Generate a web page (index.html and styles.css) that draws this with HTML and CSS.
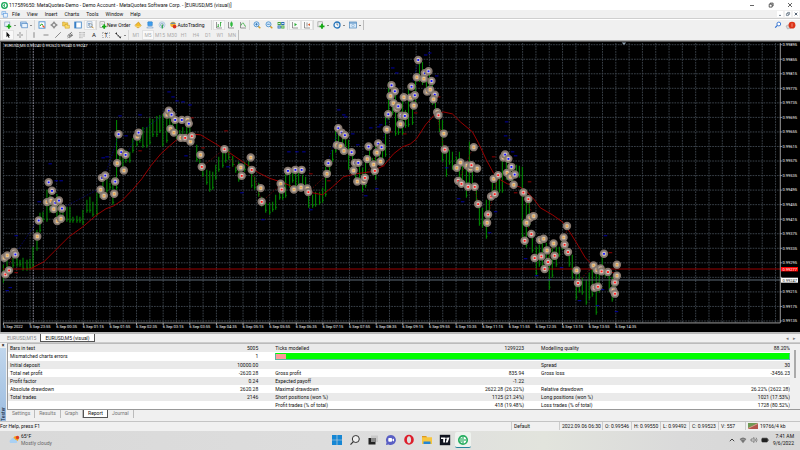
FILE: index.html
```html
<!DOCTYPE html>
<html lang="en">
<head>
<meta charset="utf-8">
<title>MetaQuotes-Demo - [EURUSD,M5 (visual)]</title>
<link rel="stylesheet" href="styles.css">
</head>
<body>
<div class="app">
  <header class="titlebar">
    <svg class="app-icon" viewBox="0 0 8 8"><circle cx="4" cy="4" r="3.2" fill="#fff" stroke="#17a657" stroke-width="1.5"/><path d="M4 2v4M2.8 3.2v1.6" stroke="#17a657" stroke-width=".9"/></svg>
    <span class="grow">117589650: MetaQuotes-Demo - Demo Account - MetaQuotes Software Corp. - [EURUSD,M5 (visual)]</span>
    <button class="win" aria-label="Minimize"><svg viewBox="0 0 6 6"><path d="M1 3.5h4" stroke="#222" stroke-width=".7"/></svg></button>
    <button class="win" aria-label="Restore"><svg viewBox="0 0 6 6"><path d="M1.2 2.2h2.9v2.9H1.2zM2.2 2V1.1h2.9V4h-.8" fill="none" stroke="#222" stroke-width=".7"/></svg></button>
    <button class="win" aria-label="Close"><svg viewBox="0 0 6 6"><path d="M1 1l4 4M5 1L1 5" stroke="#222" stroke-width=".7"/></svg></button>
  </header>

  <nav class="menubar">
    <svg class="doc-icon" viewBox="0 0 8 8"><rect x="1" y=".8" width="4.5" height="3.5" fill="#cfe4fa" stroke="#6fa5df" stroke-width=".7"/><rect x="2.6" y="3" width="4.6" height="4" fill="#e9f3fd" stroke="#5c98dc" stroke-width=".7"/></svg>
    <button>File</button><button>View</button><button>Insert</button><button>Charts</button><button>Tools</button><button>Window</button><button>Help</button>
    <span class="grow"></span>
    <button class="mdi" aria-label="Minimize chart"><svg viewBox="0 0 6 6"><path d="M2 4.4h2" stroke="#567" stroke-width=".8"/></svg></button>
    <button class="mdi" aria-label="Restore chart"><svg viewBox="0 0 6 6"><path d="M1.4 2.6h2v2h-2zM2.6 2.4v-1h2v2h-1" fill="none" stroke="#567" stroke-width=".7"/></svg></button>
    <button class="mdi" aria-label="Close chart"><svg viewBox="0 0 6 6"><path d="M1.7 1.7l2.6 2.6M4.3 1.7L1.7 4.3" stroke="#456" stroke-width=".9"/></svg></button>
  </nav>

  <div class="toolbar">
    <div class="group">
      <button class="drop" aria-label="New chart"><svg viewBox="0 0 8 8"><rect x=".8" y="1" width="5" height="4.6" fill="#e8f1fb" stroke="#7793b3" stroke-width=".6"/><path d="M4.9 3.2v4.6M2.6 5.5h4.6" stroke="#12a812" stroke-width="1.7"/></svg></button>
      <button class="drop" aria-label="Profiles"><svg viewBox="0 0 8 8"><rect x=".7" y="1" width="5.5" height="4" fill="#d8e9fb" stroke="#4d86c4" stroke-width=".7"/><rect x="1.8" y="2.6" width="5.5" height="4.2" fill="#e9f3fd" stroke="#4d86c4" stroke-width=".7"/></svg></button>
    </div>
    <div class="group">
      <button aria-label="Market Watch"><svg viewBox="0 0 8 8"><rect x="1" y=".8" width="6" height="6.4" fill="#fff" stroke="#4a8fd0" stroke-width=".9"/><path d="M2 5l1.5-2L5 4" stroke="#1ea51e" fill="none"/><path d="M4.5 4.5l2 2" stroke="#e55a28" stroke-width="1.2"/></svg></button>
      <button aria-label="Data Window"><svg viewBox="0 0 8 8"><circle cx="4" cy="4" r="2.2" fill="none" stroke="#666" stroke-width=".7"/><path d="M4 .5v2.6M4 4.900v2.600M.5 4h2.600M4.900 4h2.600" stroke="#555" stroke-width=".8"/></svg></button>
      <button aria-label="Navigator"><svg viewBox="0 0 8 8"><path d="M.6 1h2l.6.8h2.600V5H.6z" fill="#f5cf55" stroke="#c59423" stroke-width=".5"/><path d="M3 3.500h1.600l.6.7h2.200v3H3z" fill="#fbdc6c" stroke="#c59423" stroke-width=".5"/></svg></button>
      <button aria-label="Terminal"><svg viewBox="0 0 8 8"><rect x=".7" y="1" width="6.600" height="6" fill="#fff" stroke="#377fc6" stroke-width=".8"/><path d="M1.600 1v6" stroke="#377fc6" stroke-width="1.400"/></svg></button>
      <button class="pressed" aria-label="Strategy Tester"><svg viewBox="0 0 8 8"><rect x="1" y=".8" width="5" height="5.500" fill="#f4f8fc" stroke="#8aa6c3" stroke-width=".6"/><path d="M2 2.500h2M2 4h1" stroke="#3b78bd" stroke-width=".6"/><circle cx="4.600" cy="4.200" r="1.600" fill="#d8ebfc" stroke="#777" stroke-width=".6"/><path d="M5.800 5.400l1.600 1.800" stroke="#c58a21" stroke-width="1"/></svg></button>
    </div>
    <div class="group">
      <button class="wide"><svg viewBox="0 0 8 8"><rect x="1" y=".8" width="4.500" height="5.500" fill="#fff" stroke="#888" stroke-width=".6"/><path d="M2 2.300h2.500M2 3.500h2" stroke="#999" stroke-width=".4"/><path d="M5.200 3.200v4.600M2.900 5.500h4.600" stroke="#12a812" stroke-width="1.700"/></svg>New Order</button>
      <button aria-label="MetaEditor"><svg viewBox="0 0 8 8"><path d="M.8 4.500L4.500 1l2.700 3.700L4 7z" fill="#f4bd2c" stroke="#bd8513" stroke-width=".6"/><path d="M.8 4.500L4 6l3.200-1.300" fill="none" stroke="#fff0a8" stroke-width=".6"/></svg></button>
      <button aria-label="Virtual hosting"><svg viewBox="0 0 8 8"><rect x="1.800" y=".8" width="4.500" height="4" rx=".5" fill="#3d9df0" stroke="#2377bd" stroke-width=".5"/><path d="M.7 7c.4-2 6.200-2 6.600 0z" fill="#dceafa" stroke="#6c93bd" stroke-width=".5"/></svg></button>
      <button aria-label="Signals"><svg viewBox="0 0 8 8"><circle cx="4" cy="3.800" r="3" fill="none" stroke="#9bbcd8" stroke-width=".7"/><circle cx="4" cy="3.800" r="1.600" fill="none" stroke="#5f91c2" stroke-width=".6"/><path d="M4.300 3.500v4" stroke="#27a343" stroke-width="1.200"/></svg></button>
      <button class="wide"><svg viewBox="0 0 8 8"><circle cx="4" cy="3.500" r="2.700" fill="#f2b431"/><path d="M1 2.800Q4 0 7 2.800z" fill="#3a83c8"/><circle cx="5.600" cy="5.600" r="1.900" fill="#d92f1d"/></svg>AutoTrading</button>
    </div>
    <div class="group spaced">
      <button class="pressed" aria-label="Bar chart"><svg viewBox="0 0 8 8"><path d="M1.500 1v6H7" fill="none" stroke="#555" stroke-width=".6"/><path d="M3.300 3v3M5.500 1v4.500M5.500 1.500h1M2.400 5.500h1" stroke="#22a32b" stroke-width=".8"/></svg></button>
      <button aria-label="Candlesticks"><svg viewBox="0 0 8 8"><path d="M1.500 1v6H7" fill="none" stroke="#555" stroke-width=".6"/><path d="M4.500.5v5.500" stroke="#16912a" stroke-width=".7"/><rect x="3.300" y="1.500" width="2.400" height="3.300" fill="#2bbb3a"/></svg></button>
      <button aria-label="Line chart"><svg viewBox="0 0 8 8"><path d="M1.500 1v6H7" fill="none" stroke="#555" stroke-width=".6"/><path d="M2 4.500Q3.800 0 5 3.200T7 5" fill="none" stroke="#22a32b" stroke-width=".7"/></svg></button>
    </div>
    <div class="group">
      <button aria-label="Zoom in"><svg viewBox="0 0 8 8"><path d="M5 5l2.300 2.300" stroke="#d69e25" stroke-width="1.400"/><circle cx="3.500" cy="3.300" r="2.500" fill="#d6ebfd" stroke="#3c86c9" stroke-width=".8"/><path d="M2.200 3.300h2.600M3.500 2v2.600" stroke="#2168ae" stroke-width=".7"/></svg></button>
      <button aria-label="Zoom out"><svg viewBox="0 0 8 8"><path d="M5 5l2.300 2.300" stroke="#d69e25" stroke-width="1.400"/><circle cx="3.500" cy="3.300" r="2.500" fill="#d6ebfd" stroke="#3c86c9" stroke-width=".8"/><path d="M2.200 3.300h2.600" stroke="#2168ae" stroke-width=".7"/></svg></button>
      <button aria-label="Tile windows"><svg viewBox="0 0 8 8"><path d="M.6 1h3.200v3H.6zM4.200 4.400h3.200v3H4.200z" fill="#3fa332"/><path d="M4.200 1h3.200v3H4.200zM.6 4.400h3.200v3H.6z" fill="#2468b4"/><path d="M1.200 2.500h2M4.800 2.500h2M1.200 6h2M4.800 6h2" stroke="#e9f5ff" stroke-width=".9"/></svg></button>
    </div>
    <div class="group">
      <button class="pressed" aria-label="Auto scroll"><svg viewBox="0 0 8 8"><path d="M1.500 1v6H7" fill="none" stroke="#555" stroke-width=".6"/><path d="M3.500 2l2.500 1.600L3.500 5.300z" fill="#2aae37"/></svg></button>
      <button class="pressed" aria-label="Chart shift"><svg viewBox="0 0 8 8"><path d="M1.500 1v6H7M4 1.500v4" fill="none" stroke="#555" stroke-width=".6"/><path d="M7 2.300L4.800 3.700 7 5z" fill="#d85d31"/></svg></button>
    </div>
    <div class="group end">
      <button class="drop" aria-label="Indicators"><svg viewBox="0 0 8 8"><rect x=".9" y=".8" width="4.500" height="5" fill="#eee" stroke="#888" stroke-width=".6"/><path d="M5 2.800v5M2.500 5.300h5" stroke="#12a812" stroke-width="1.800"/></svg></button>
      <button class="drop" aria-label="Periods"><svg viewBox="0 0 8 8"><circle cx="4" cy="4" r="3" fill="#f4faff" stroke="#2674ba" stroke-width="1.300"/><path d="M4 2.200V4h1.300" fill="none" stroke="#345" stroke-width=".6"/></svg></button>
      <button class="drop" aria-label="Templates"><svg viewBox="0 0 8 8"><rect x=".6" y="1" width="6.800" height="6" fill="#d9ebfb" stroke="#4a86bd" stroke-width=".7"/><path d="M.6 2h6.800" stroke="#4a86bd"/><circle cx="4" cy="4.500" r="1.300" fill="none" stroke="#6a9bc6" stroke-width=".5"/></svg></button>
    </div>
    <span class="grow"></span>
    <button aria-label="Search"><svg viewBox="0 0 8 8"><circle cx="4.800" cy="3" r="1.900" fill="#fff" stroke="#2f6fd0" stroke-width=".9"/><path d="M3.400 4.400L1.200 6.700" stroke="#2f6fd0" stroke-width="1.200"/></svg></button>
    <button class="alerts" aria-label="Notifications"><svg viewBox="0 0 12 9"><path d="M1 5l3-1.500L6 7 2.500 8z" fill="#d6d6d6" stroke="#999" stroke-width=".5"/><circle cx="7" cy="4.200" r="3.400" fill="#dc3318"/><path d="M7 2.400v3.400" stroke="#f6b9aa" stroke-width=".7"/></svg></button>
  </div>

  <div class="toolbar second">
    <div class="group">
      <button class="pressed" aria-label="Cursor"><svg viewBox="0 0 8 8"><path d="M2.500.8v5.400l1.300-1.100L4.700 7l.9-.5-.9-1.700h1.500z" fill="#111"/></svg></button>
      <button aria-label="Crosshair"><svg viewBox="0 0 8 8"><path d="M4 1v2.400M4 4.600V7M1 4h2.400M4.600 4H7" stroke="#555" stroke-width=".6"/></svg></button>
    </div>
    <div class="group">
      <button aria-label="Vertical line"><svg viewBox="0 0 8 8"><path d="M4 1.200v5.600" stroke="#444" stroke-width=".6"/></svg></button>
      <button aria-label="Horizontal line"><svg viewBox="0 0 8 8"><path d="M1.500 4h5" stroke="#444" stroke-width=".6"/></svg></button>
      <button aria-label="Trendline"><svg viewBox="0 0 8 8"><path d="M1.200 6.800l5.600-5.600" stroke="#444" stroke-width=".6"/></svg></button>
      <button aria-label="Channel"><svg viewBox="0 0 8 8"><path d="M1 5.500L6 1M1.500 7l5-4M3 7l4-3M2.500 3.500l2 2M4 2l2 3" stroke="#444" stroke-width=".6"/></svg></button>
      <button aria-label="Fibonacci"><svg viewBox="0 0 8 8"><path d="M1 1.500h6M1 3.200h6M1 5h6M1 6.700h4" stroke="#666" stroke-width=".5" stroke-dasharray=".8 .5"/></svg></button>
      <button class="glyph">A</button>
      <button class="glyph boxed">T</button>
      <button class="drop" aria-label="Arrows"><svg viewBox="0 0 8 8"><path d="M1 2.500l2-1.300v2.400zM3.500 4l1.500.8L4 6z M5 6.500l2.300-1.300L6.500 7.500z" fill="#222"/><path d="M2 2.500l4 3.500" stroke="#333" stroke-width=".7"/></svg></button>
    </div>
    <div class="group end frames">
      <button>M1</button><button class="pressed">M5</button><button>M15</button><button>M30</button><button>H1</button><button>H4</button><button>D1</button><button>W1</button><button>MN</button>
    </div>
  </div>

  <main class="chart">
    <svg id="chart" viewBox="0 42 800 290" role="img" aria-label="EURUSD M5 chart"></svg>
  </main>

  <div class="chart-tabs">
    <button>EURUSD,M15</button><button class="active">EURUSD,M5 (visual)</button>
    <span class="grow"></span>
    <button class="arrow" aria-label="Previous">◂</button><button class="arrow" aria-label="Next">▸</button>
  </div>

  <section class="tester">
    <div class="side"><button class="close" aria-label="Close tester">×</button><span class="side-label">Tester</span></div>
    <div class="panel">
      <div class="report">
        <table>
          <colgroup><col class="c-label first"><col class="c-value"><col class="c-label"><col class="c-value"><col class="c-label"><col class="c-value"></colgroup>
          <tr><td>Bars in test</td><td>5005</td><td>Ticks modelled</td><td>1299223</td><td>Modelling quality</td><td>88.20%</td></tr>
          <tr><td>Mismatched charts errors</td><td>1</td><td colspan="4" class="quality"><div class="bar"><i></i></div></td></tr>
          <tr><td>Initial deposit</td><td>10000.00</td><td></td><td></td><td>Spread</td><td>30</td></tr>
          <tr><td>Total net profit</td><td>-2620.28</td><td>Gross profit</td><td>835.94</td><td>Gross loss</td><td>-3456.23</td></tr>
          <tr><td>Profit factor</td><td>0.24</td><td>Expected payoff</td><td>-1.22</td><td></td><td></td></tr>
          <tr><td>Absolute drawdown</td><td>2620.28</td><td>Maximal drawdown</td><td>2622.28 (26.22%)</td><td>Relative drawdown</td><td>26.22% (2622.28)</td></tr>
          <tr><td>Total trades</td><td>2146</td><td>Short positions (won %)</td><td>1125 (21.24%)</td><td>Long positions (won %)</td><td>1021 (17.53%)</td></tr>
          <tr><td></td><td></td><td>Profit trades (% of total)</td><td>418 (19.48%)</td><td>Loss trades (% of total)</td><td>1728 (80.52%)</td></tr>
        </table>
        <div class="scroll"><i></i></div>
      </div>
      <div class="tester-tabs"><button>Settings</button><button>Results</button><button>Graph</button><button class="active">Report</button><button>Journal</button></div>
    </div>
  </section>

  <footer class="status">
    <span class="grow">For Help, press F1</span>
    <span class="s-profile">Default</span><span class="s-date">2022.09.06 06:30</span><span class="s-price">O: 0.99546</span><span class="s-price">H: 0.99550</span><span class="s-price">L: 0.99492</span><span class="s-price">C: 0.99523</span><span class="s-vol">V: 557</span>
    <span class="s-net"><svg viewBox="0 0 10 6"><rect width="10" height="6" fill="#b3544c"/><path d="M0 0h10L0 5z" fill="#6f9a55"/><path d="M0 5.500L10 .5" stroke="#e6dcc0" stroke-width=".6"/></svg>19766/4 kb</span>
  </footer>

  <div class="taskbar">
    <div class="weather">
      <svg viewBox="0 0 11 10"><circle cx="7" cy="3.500" r="2.600" fill="#f5a623"/><circle cx="8.500" cy="2.500" r="1.700" fill="#dd3a24"/><path d="M1.500 8a2 2 0 0 1 .5-3.600A2.500 2.500 0 0 1 6.600 5 1.600 1.600 0 0 1 7.500 8z" fill="#a9d0f3"/></svg>
      <div><div>65°F</div><div class="dim">Mostly cloudy</div></div>
    </div>
    <div class="apps">
      <button aria-label="Start"><svg viewBox="0 0 12 12"><path d="M1 1h4.700v4.700H1zM6.300 1H11v4.700H6.300zM1 6.300h4.700V11H1zM6.300 6.300H11V11H6.300z" fill="#1687d4"/></svg></button>
      <button aria-label="Search"><svg viewBox="0 0 12 12"><circle cx="6.800" cy="5" r="3.500" fill="#eee" stroke="#333" stroke-width="1"/><path d="M4.300 7.600L1.500 10.700" stroke="#333" stroke-width="1.200"/></svg></button>
      <button aria-label="Task view"><svg viewBox="0 0 12 12"><rect x="4" y="1.500" width="7" height="6.500" fill="#c9c9c9"/><rect x="1.500" y="4" width="7" height="6.500" fill="#222"/><rect x="4" y="4" width="4.500" height="4" fill="#888"/></svg></button>
      <button aria-label="Chat"><svg viewBox="0 0 12 12"><path d="M6 1a5 5 0 1 1-2.500 9.400L1 11l.5-2.700A5 5 0 0 1 6 1z" fill="#5a5fc4"/><rect x="3.300" y="4" width="3.700" height="3.800" rx=".8" fill="#fff"/><path d="M7.300 5.500L9 4.500v3L7.300 6.500z" fill="#fff"/></svg></button>
      <button aria-label="Opera"><svg viewBox="0 0 12 12"><path fill-rule="evenodd" d="M6 .8a4.800 5 0 1 1 0 10 4.800 5 0 0 1 0-10zM6 2.200c-1.300 0-2.100 1.600-2.100 3.600S4.700 9.400 6 9.400s2.100-1.600 2.100-3.600S7.300 2.200 6 2.200z" fill="#dd1e2b"/></svg></button>
      <button aria-label="File Explorer"><svg viewBox="0 0 12 12"><path d="M1 2h4l1 1.300h5V10H1z" fill="#f7c63f"/><path d="M1 2h4l1 1.300H1z" fill="#dd9920"/><path d="M2.500 10V7.500h7V10z" fill="#2185d5"/></svg></button>
      <button aria-label="TradingView"><svg viewBox="0 0 12 12"><rect x=".8" y=".8" width="10.400" height="10.400" fill="#10141f"/><path d="M2 3.500h4v5H4.200V5H2z" fill="#fff"/><circle cx="7" cy="4.300" r=".8" fill="#fff"/><path d="M8.300 3.500h2.200L8.600 8.500H6.700z" fill="#fff"/></svg></button>
      <button class="current" aria-label="MetaTrader"><svg viewBox="0 0 12 12"><circle cx="6" cy="6" r="4.200" fill="#fff" stroke="#27ae60" stroke-width="1.700"/><path d="M6 2.500v7M4 4v4M8 5v2" stroke="#27ae60" stroke-width="1.200"/></svg></button>
    </div>
    <div class="tray">
      <svg viewBox="0 0 8 8"><path d="M1.800 5.200L4 3l2.200 2.200" fill="none" stroke="#333" stroke-width=".9"/></svg>
      <svg viewBox="0 0 8 8"><path d="M.6 3Q4-.2 7.400 3L4 7.200z" fill="#777"/><path d="M1.800 4.200Q4 2.200 6.200 4.200" fill="none" stroke="#ccc" stroke-width=".4"/></svg>
      <svg viewBox="0 0 8 8"><path d="M1 3h1.300L4 1.500v5L2.300 5H1z" fill="none" stroke="#555" stroke-width=".6"/><path d="M5 2.700q1 1.300 0 2.600M6.200 1.700q1.700 2.300 0 4.600" fill="none" stroke="#555" stroke-width=".6"/></svg>
      <svg viewBox="0 0 8 8"><rect x=".8" y="2.200" width="5.700" height="3.800" rx=".8" fill="#222" stroke="#222" stroke-width=".6"/><path d="M7.200 3.400v1.400" stroke="#222" stroke-width=".8"/></svg>
      <div class="clock"><div>7:41 AM</div><div>9/6/2022</div></div>
    </div>
  </div>
</div>
<script src="chart.js"></script>
</body>
</html>
```
FILE: styles.css
```css
* { box-sizing: border-box; }
body { margin: 0; background: #f0f0f0; color: #111; font: 5px/8px Roboto, "Noto Sans", sans-serif; }
button { margin: 0; padding: 0; border: 0; background: none; font: inherit; color: inherit; line-height: inherit; }
svg { display: block; flex: none; }
.grow { flex: 1; }
.app { min-height: 100vh; display: flex; flex-direction: column; }

.titlebar { display: flex; align-items: center; height: 10px; padding: 0 1px; background: #fff; white-space: nowrap; }
.app-icon, .doc-icon { width: 7px; height: 7px; margin-right: 1px; }
.win { width: 19px; display: flex; justify-content: center; }
.win svg { width: 6px; height: 6px; }

.menubar { display: flex; align-items: center; height: 9px; padding: 0 1px; border-bottom: 1px solid #cfcfcf; background: #f0f0f0; }
.doc-icon { margin-right: 2px; }
.menubar button { margin: 0 4px 0 1px; padding: 0 1px; }
.menubar .mdi { margin: 0 0 0 2px; padding: 0; width: 6px; height: 6px; background: #fff; }

.toolbar { display: flex; align-items: center; height: 11px; padding-right: 2px; border-top: 1px solid #fff; }
.toolbar.second { height: 11px; border-top: 0; border-bottom: 1px solid #a8a8a8; }
.group { display: flex; align-items: center; height: 10px; padding-left: 1px; border-left: 1px solid #d8d8d8; }
.group.spaced { margin-left: 4px; }
.group.end { border-right: 1px solid #bdbdbd; }
.toolbar button { min-width: 12px; height: 10px; display: flex; align-items: center; justify-content: center; }
.toolbar svg { width: 8px; height: 8px; }
.toolbar .pressed { background: #f9f9f9; box-shadow: inset 0 0 0 1px #e2e2e2; }
.toolbar .drop { width: 16px; }
.toolbar .drop::after { content: ""; margin-left: 2px; border: 1px solid transparent; border-top-color: #222; border-bottom: 0; }
.toolbar .wide { padding: 0 2px 0 1px; }
.toolbar .alerts { width: 14px; }
.toolbar .alerts svg { width: 12px; height: 9px; }
.glyph { font-size: 6px; }
.boxed { outline: 1px dotted #bbb; outline-offset: -3px; }
.frames { color: #aaa; }

.chart { background: #000; border-left: 1px solid #666; border-top: 1px solid #555; }
.chart svg { width: 100%; height: auto; }
.chart text { font: 4px Roboto, sans-serif; fill: #fff; }

.chart-tabs { display: flex; height: 11px; padding-right: 2px; border-top: 2px solid #b9b9b9; border-bottom: 1px solid #ccc; color: #888; }
.chart-tabs button { padding: 0 4px 0 7px; height: 8px; }
.chart-tabs .active, .tester-tabs .active { background: #fff; border: 1px solid #555; border-top: 0; color: #111; }
.chart-tabs .active { padding: 0 4px; }
.chart-tabs .arrow { padding: 0 2px; color: #777; }

.tester { display: flex; height: 78px; }
.side { width: 6px; display: flex; flex-direction: column; margin-right: 1px; background: linear-gradient(#c3d8ed, #9dbde0); }
.close { height: 5px; line-height: 5px; font-weight: 700; background: #f0f0f0; }
.side-label { margin-top: auto; writing-mode: vertical-rl; transform: rotate(180deg); line-height: 6px; color: #123; }
.panel { flex: 1; min-width: 0; display: flex; flex-direction: column; }
.report { display: flex; height: 67px; border: 1px solid #999; border-top-color: #bbb; border-right: 0; background: #fff; }
table { flex: 1; border-collapse: collapse; table-layout: fixed; height: 65px; line-height: 6px; }
.c-label { width: 22%; }
.c-label.first { width: 20%; }
.c-value { width: 12%; }
tr:nth-child(odd) { background: #eaeaea; }
td { padding: 0 0 0 2px; white-space: nowrap; }
td:nth-child(even) { text-align: right; }
td:nth-child(n+3):nth-child(odd) { padding-left: 17px; }
.bar { height: 7px; background: #0f0; border: 1px solid #55b8a0; border-top-color: #0f0; }
.bar i { display: block; width: 2%; height: 5px; background: #f99; }
.scroll { width: 10px; padding: 6px 2px; background: #f0f0f0; }
.scroll i { display: block; width: 2px; height: 28px; margin: auto; background: #aaa; }
.tester-tabs { display: flex; height: 9px; padding-left: 1px; color: #777; }
.tester-tabs button { padding: 0 4px; height: 8px; border-right: 1px solid #bbb; line-height: 7px; }

.status { display: flex; align-items: center; height: 10px; border-top: 1px solid #c4c4c4; white-space: nowrap; }
.status span + span { padding-left: 2px; border-left: 1px solid #ccc; }
.s-profile { width: 48px; }
.s-date { width: 43px; }
.s-price { width: 29px; }
.s-vol { width: 27px; }
.s-net { width: 55px; display: flex; align-items: center; gap: 2px; }
.s-net svg { width: 10px; height: 6px; }

.taskbar { flex: 1; min-height: 19px; display: grid; grid-template-columns: 1fr auto 1fr; align-items: center; background: linear-gradient(90deg, #d9d9d9, #dedede 50%, #e2e4dd 68%, #dadada 85%, #d7d7d7); }
.weather { display: flex; align-items: center; gap: 1px; padding-left: 9px; line-height: 7px; }
.weather svg { width: 11px; height: 10px; }
.dim { color: #666; }
.apps { display: flex; gap: 2px; }
.apps button { width: 16px; height: 16px; display: flex; align-items: center; justify-content: center; border-radius: 2px; }
.apps svg { width: 12px; height: 12px; }
.apps .current { background: #eef2ee; border-bottom: 1px solid #27849c; }
.tray { display: flex; align-items: center; justify-content: flex-end; gap: 3px; padding-right: 6px; line-height: 7px; }
.tray svg { width: 8px; height: 8px; }
.clock { min-width: 22px; text-align: right; }
```
FILE: chart.js
```js
const svg = document.getElementById("chart");
const NS = "http://www.w3.org/2000/svg";

function add(tag, attrs, text) {
  const el = document.createElementNS(NS, tag);
  for (const key in attrs) el.setAttribute(key, attrs[key]);
  if (text) el.textContent = text;
  svg.appendChild(el);
}
function line(x1, y1, x2, y2, stroke, extra) {
  add("line", Object.assign({ x1, y1, x2, y2, stroke }, extra));
}

const TOP = 44.7, STEP_Y = 14.56, STEP_X = 13.33, RIGHT = 780.3, BOTTOM = 323.3;

// Grid
const dash = { "stroke-dasharray": "1.7 1", "stroke-width": 0.9 };
for (let x = 2.4; x < RIGHT; x += STEP_X) line(x, 43, x, BOTTOM, "#3f4750", dash);
for (let i = 0; i < 20; i++) line(2, TOP + i * STEP_Y, RIGHT, TOP + i * STEP_Y, "#3f4750", dash);
line(32.3, 43, 32.3, BOTTOM, "#99a", dash);

// Price bars: x, high, low
const bars = `2.4 265 283,6 258 275,12 257 268,16 258 267,19 260 267,22 258 271,26 260 271,29 259 270,32 247 269,36 230 251,39 213 233,42 212 222,46 190 222,49 195 213,52 198 213,56 194 220,59 200 220,62 205 222,66 207 222,69 207 223,72 217 223,76 216 223,79 217 223,82 210 225,86 200 213,89 197 213,92 202 217,96 193 216,99 187 198,102 180 196,106 178 193,109 183 190,112 178 205,115.700 120 190,119 150 163,122 157 173,125 150 163,129 152 163,132 138 153,136 137 147,139 133 143,142 127 148,146 127 148,149 118 145,152 119 137,156 116 137,159 115 133,162 114 147,166 112 143,169 115 130,172 120 135,176 120 140,179 130 140,182 127 140,186 120 140,189 123 143,192 135 145,196 145 162,199 155 170,202 165 177,206 170 185,209 171 192,212 172 190,215 165 180,218 157 172,222 150 168,225 148 163,228 150 160,232 156 167,235 167 173,238 162 182,241 172 178,244 162 172,248 160 170,251 168 188,254 177 190,258 183 197,261 197 207,265 203 213,269 203 215,272 202 212,275 195 210,279 183 200,282 188 200,285 172 198,289 170 188,292 168 183,295 172 188,298 172 187,302 175 187,305 177 190,308 187 208,312 195 208,315 192 207,319 192 205,322 188 203,325 167 197,329 160 175,332 150 162,335 130 153,338 130 150,342 132 150,345 135 155,348 140 170,352 150 165,355 160 180,359 160 185,362 168 192,365 155 188,369 145 165,372 158 175,375 145 180,379 145 165,382 145 165,385 115 157,388 82 120,392 85 115,395 95 136,398 108 135,402 97 135,405 110 128,408 85 127,412 100 125,415 78 105,419 62 82,422 62 85,426 73 92,429 75 93,432 82 105,435 95 117,439 112 132,442 120 162,446 148 177,449 150 165,452 152 170,456 157 170,459 152 180,462 165 185,466 163 198,469 142 190,472 165 187,476 188 208,479 205 226,482 208 228,486 200 239,489 197 220,492 183 198,496 178 196,499 172 193,502 155 193,506 157 180,509 160 180,512 168 187,516 165 177,519 166 178,522 167 238,526 190 248,529 197 227,532 232 253,536 247 276,539 245 267,542 243 267,546 243 270,549 252 290,552 243 278,556 247 267,559 247 257,562 237 250,566 242 255,569 250 267,572 255 280,576 268 300,579 273 293,582 278 295,586 280 305,589 273 300,592 263 297,596 270 315,599 273 293,602 253 273,605 268 277,609 272 292,612 277 302,615 273 297`;
for (const [x, high, low] of bars.split(",").map(b => b.split(" ").map(Number))) {
  line(x, high, x, low, "#008400", { "stroke-width": 1.1 });
  line(x, low - 2.5, x + 1.3, low - 2.5, "#00a000", { "stroke-width": 0.7 });
}

// Closed trade connections
const links = {
  "#0a0a8c": "14 254 37 221,62 208 100 188,104 176 118 135,125 155 138 133,138 133 168 111,327 163 338 128,381 147 388 114,411 87 418 60",
  "#8c0a0a": "201 167 224 149,224 149 241 176,251 170 261 202,261 202 281 184,308 192 327 174,364 178 377 153,436 112 444 150,458 181 473 147,474 187 478 204,488 215 498 175,523 193 533 216,531 234 526 223,544 269 553 244,564 245 567 226,577 283 593 266,5 274 13 252"
};
for (const stroke in links)
  for (const l of links[stroke].split(","))
    line(...l.split(" "), stroke, { "stroke-width": 0.7, "stroke-dasharray": "1.5 1.5" });

// Order ticks
const ticks = {
  "#0000b4": "49 164,55 181,60 181,102 158,106 157,119 116,125 136,139 115,168 92,172 97,176 101,182 102,189 105,185 156,15 236,6 291,9 288,38 202,227 167,241 193,262 220,288 152,296 152,303 152,310 210,338 110,343 115,345 117,352 134,357 145,370 128,380 125,392 68,396 73,378 127,365 196,376 189,425 55,429 53,436 76,505 136,509 140,515 156,458 199,462 202,489 233,495 212,506 122,512 152,525 259,536 276,549 280,561 268,579 301,605 236,602 290,597 306,610 290,615 297,616 312,446 168",
  "#a00000": "191 118,202 148,139 151,15 273,225 131,223 147,310 174,328 181,382 166,389 132,415 113,404 134,438 97,529 182,515 193,610 253,618 264,493 157,608 275"
};
for (const stroke in ticks)
  for (const t of ticks[stroke].split(",")) {
    const [x, y] = t.split(" ").map(Number);
    line(x - 1.5, y, x + 2, y, stroke, { "stroke-width": 0.9 });
  }

// Price levels
line(2, 269.3, RIGHT, 269.3, "#990000", { "stroke-width": 1.2 });
line(2, 280.3, RIGHT, 280.3, "#5f6c78", { "stroke-width": 1 });

// Moving average
add("polyline", {
  points: "29,269.300 43,262 53,252 68,237 82,227 96,215 105,209 113,206 122,200 132,189.500 141,179 150,166 160,154 170,145 178,138 190,134 200,135 215,144 229,153 245,164 258,173 269,178.500 283,183 292,187 306,189.500 312,193 322,195 332,187 343,177 355,174 370,172 383,166 393,154 402,147 410,144 416,139 425,125 433,116 443,112 452,114 460,122 472,132 478,143 486,160 493,173 500,180 507,184 519,187 526,191 534,200 540,208 552,215 562,222 570,233 578,246 585,258 592,265 602,270 616,274",
  fill: "none", stroke: "#980000", "stroke-width": 1
});

// Trade markers: x, y, kind (b buy, r sell, y close)
const markers = `47.7 182.5 b,51 191 b,46 202.3 y,50 201 y,54.3 203 b,58 200.7 b,52.7 209.3 y,61 208.7 b,56.3 221.3 y,60 219 y,37.7 220.7 b,36.3 236.7 y,3.3 258 y,6.3 255.7 y,13 252.3 y,14.3 254.7 b,4.3 274.7 r,8 270.7 r,99.7 190 y,103 196 y,113.3 194 y,101 178 b,104.3 175.7 b,114.3 181.7 b,116.3 163.3 y,123 170.7 y,120.3 152.3 b,124.7 155 b,117.7 134.3 b,136.3 136.7 y,137.7 132.7 b,166.3 114.7 y,168 110.7 b,170.7 114.7 b,174.3 120 b,181 120 b,186.7 120 y,188 123.7 b,169.7 129 y,173 132.7 y,180 138 y,184.3 138 r,189.7 141.7 y,191 136.3 r,199.7 155 y,201 167 r,223.7 149.3 r,250 157.7 y,240 167.7 y,241 176 r,251 170 r,260 188.3 y,261 202 r,287.3 171 b,294.7 170 b,301 170 b,280 184 y,281 189.7 r,293.3 189.7 y,300.3 187.7 y,306.7 188.7 y,307.7 192.3 r,326.3 174 y,327.7 163.3 b,337.7 128.3 b,341 132.7 b,344.3 135.3 b,336.3 145.3 y,340 146.3 y,343.3 151 y,351 152.3 b,354.3 163 b,357.7 163 b,353 170.7 y,356.7 181.7 y,363 181.3 y,364.3 178 r,368 146.7 b,377.7 143.7 b,381 147.3 b,376.3 152.7 y,366.7 159.3 y,373 164.7 y,380 161.7 y,374.3 171 r,386.3 129.7 y,387.7 114.3 b,391 85.3 b,394.3 91.3 b,390 96 y,393 103.3 y,396.3 108.7 y,397.7 106.3 b,401 115.7 b,404.3 116 b,400 124.3 y,403.3 97.3 y,411 86.7 b,410 97.7 y,414.3 95.3 b,413.3 105.7 y,417.7 60 b,416.3 77.3 y,424.3 73.3 b,428 71.3 b,423.3 78.7 y,431 81 b,426.7 91.7 y,429.7 89.7 y,434.3 94.7 b,433 99.3 y,436.7 112.3 y,438 115.3 r,443.3 133.7 y,444.3 149.7 r,473.3 147.3 y,460 162.7 y,456.3 168 y,466.7 165.7 y,470 168.7 y,471 165.3 r,476.7 168.7 y,457.7 181 r,461 184 r,467.7 187 r,474.3 187 r,477.7 204.3 r,486.7 223 y,487.7 214.7 r,490.7 196.7 r,494.3 194.3 r,493.3 179 y,497.7 175.3 r,503 157.7 y,504.7 154.7 b,508 159 b,511 167 b,506.7 173 y,510 177 y,514.3 174.7 b,513.3 185 y,523 192.7 r,528 199.3 r,529.7 218 y,533.3 216.3 y,526.3 223 y,531 234.3 r,524.3 241 r,539.7 240.3 y,543.3 239 y,553.3 243.7 y,546.7 250.7 y,554.3 256 r,541 256.7 r,534.3 258.3 r,547.7 262.3 r,544.3 269.3 r,566.7 226.3 y,563.3 237.7 y,564.3 245 r,567.7 252.3 r,576.3 270.7 y,577.7 283.3 r,593.3 265.7 y,596.7 270.3 y,600.3 268.7 y,601.3 271.7 r,607.7 272.3 r,603.7 254 b,616.7 265 y,616.7 276 y,614.7 282.7 r,613 290.7 y,614.7 294 r,594.3 288 r,597.7 287 r`;
const core = { b: "#1010ff", r: "#ff1818", y: "#e8a050" };
for (const m of markers.split(",")) {
  const [cx, cy, kind] = m.split(" ");
  add("circle", { cx, cy, r: 3.4, fill: "#a3978f", stroke: "#85776e", "stroke-width": 1.6 });
  add("rect", { x: cx - 1.2, y: cy - 1.6, width: 2.6, height: 3.2, fill: kind === "y" ? "#f0d8a0" : "#f5e6e0" });
  add("rect", { x: cx - 0.9, y: cy - 0.9, width: 1.9, height: 1.9, fill: core[kind] });
}

// Axes
line(RIGHT, 43, RIGHT, BOTTOM, "#aaa", { "stroke-width": 0.9 });
line(2, BOTTOM, RIGHT, BOTTOM, "#aaa", { "stroke-width": 0.9 });
for (let i = 0; i < 20; i++) {
  const y = TOP + i * STEP_Y;
  line(RIGHT, y, RIGHT + 1.5, y, "#aaa");
  // The 0.99255 level lies under the bid price box
  if (i !== 16) add("text", { x: 782.5, y: y + 1.4 }, "0.99" + (895 - 40 * i));
}
for (let i = 0; i < 24; i++) {
  const minutes = 35 + 40 * (i - 2);
  const clock = String(Math.floor(minutes / 60)).padStart(2, "0") + ":" + String(minutes % 60).padStart(2, "0");
  const label = i === 0 ? "5 Sep 2022" : i === 1 ? "5 Sep 23:55" : "6 Sep " + clock;
  const x = 2.4 + i * STEP_X * 2;
  line(x, BOTTOM, x, BOTTOM + 2, "#aaa");
  add("text", { x: x - 0.5, y: 328.7 }, label);
}
add("rect", { x: 781, y: 267.3, width: 17, height: 4.4, fill: "#f00" });
add("text", { x: 782.5, y: 271 }, "0.99277");
add("rect", { x: 781, y: 278, width: 17, height: 5, fill: "#fff" });
add("text", { x: 782.5, y: 282.3, style: "fill:#111" }, "0.99247");
add("path", { d: "M621.500 42.500h4.500l-2.200 2.500z", fill: "#8fa0b0" });
add("text", { x: 3.5, y: 47 }, "EURUSD,M5  0.99240 0.99262 0.99240 0.99247");
```
